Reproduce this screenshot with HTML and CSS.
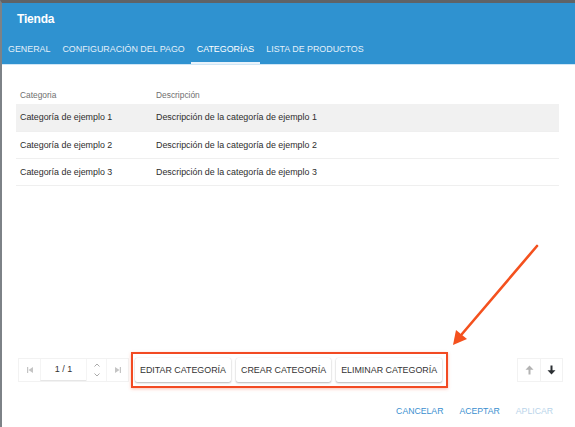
FILE: index.html
```html
<!DOCTYPE html>
<html lang="es">
<head>
<meta charset="utf-8">
<title>Tienda</title>
<link rel="stylesheet" href="styles.css">
</head>
<body>
<div class="dialog">
  <header class="header">
    <h1 class="title">Tienda</h1>
    <nav class="tabs">
      <span class="tab">GENERAL</span>
      <span class="tab">CONFIGURACIÓN DEL PAGO</span>
      <span class="tab active">CATEGORÍAS</span>
      <span class="tab">LISTA DE PRODUCTOS</span>
    </nav>
  </header>
  <main class="content">
    <table class="grid">
      <thead>
        <tr><th class="c1">Categoria</th><th>Descripción</th></tr>
      </thead>
      <tbody>
        <tr class="selected"><td>Categoría de ejemplo 1</td><td>Descripción de la categoría de ejemplo 1</td></tr>
        <tr><td>Categoría de ejemplo 2</td><td>Descripción de la categoría de ejemplo 2</td></tr>
        <tr><td>Categoría de ejemplo 3</td><td>Descripción de la categoría de ejemplo 3</td></tr>
      </tbody>
    </table>
  </main>
  <div class="toolbar">
    <div class="pager">
      <span class="pbtn"><svg width="8" height="8" viewBox="0 0 8 8"><rect x="1" y="1" width="1.2" height="6" fill="#c4c4c4"/><path d="M7 1 L2.5 4 L7 7Z" fill="#c4c4c4"/></svg></span>
      <span class="pinput">1 / 1</span>
      <span class="spin"><svg width="8" height="18" viewBox="0 0 8 18"><path d="M1.5 5.5 L4 3 L6.5 5.5" fill="none" stroke="#aaa" stroke-width="1"/><path d="M1.5 12.5 L4 15 L6.5 12.5" fill="none" stroke="#aaa" stroke-width="1"/></svg></span>
      <span class="pbtn"><svg width="8" height="8" viewBox="0 0 8 8"><path d="M1 1 L5.5 4 L1 7Z" fill="#c4c4c4"/><rect x="5.8" y="1" width="1.2" height="6" fill="#c4c4c4"/></svg></span>
    </div>
    <div class="highlight">
      <button class="btn">EDITAR CATEGORÍA</button>
      <button class="btn">CREAR CATEGORÍA</button>
      <button class="btn">ELIMINAR CATEGORÍA</button>
    </div>
    <div class="order">
      <span class="obtn"><svg width="9" height="10" viewBox="0 0 9 10"><path d="M4.5 0.5 L8.5 4.8 H5.5 V9.5 H3.5 V4.8 H0.5Z" fill="#b3b3b3"/></svg></span>
      <span class="obtn"><svg width="9" height="10" viewBox="0 0 9 10"><path d="M4.5 9.5 L8.5 5.2 H5.5 V0.5 H3.5 V5.2 H0.5Z" fill="#2b2f33"/></svg></span>
    </div>
  </div>
  <footer class="footer">
    <span class="fbtn">CANCELAR</span>
    <span class="fbtn">ACEPTAR</span>
    <span class="fbtn disabled">APLICAR</span>
  </footer>
  <svg class="annot" width="575" height="427" viewBox="0 0 575 427">
    <line x1="537" y1="246" x2="462" y2="334" stroke="#f4511e" stroke-width="2.6" stroke-linecap="round"/>
    <path d="M453 345 L456 330 L467 339Z" fill="#f4511e"/>
  </svg>
</div>
</body>
</html>
```
FILE: styles.css
```css
* { box-sizing: border-box; }
html, body { margin: 0; padding: 0; }
body {
  font-family: "Liberation Sans", Arial, sans-serif;
  background: #fff;
  width: 575px;
  height: 427px;
  overflow: hidden;
}
.dialog {
  position: relative;
  height: 427px;
  display: flex;
  flex-direction: column;
  border-top: 3px solid #5f6367;
  border-left: 2px solid #7d8287;
}
.header {
  background: #2f92d0;
  height: 62px;
  display: flex;
  flex-direction: column;
  border-bottom: 1px solid #cfe6f6;
}
.title {
  margin: 0;
  padding: 9px 0 0 15px;
  height: 35px;
  color: #fff;
  font-size: 12px;
  font-weight: bold;
  letter-spacing: -0.2px;
}
.tabs {
  display: flex;
  padding-left: 0;
  height: 26px;
}
.tab {
  color: #e4f0f9;
  font-size: 8.9px;
  padding: 0 6px 3px;
  display: flex;
  align-items: center;
  border-bottom: 2px solid transparent;
  white-space: nowrap;
}
.tab.active {
  color: #fff;
  border-bottom-color: #e9f3fb;
}
.content {
  flex: 1;
  padding: 21px 16px 0 14px;
}
.grid {
  width: 100%;
  border-collapse: collapse;
}
.grid th {
  text-align: left;
  font-weight: normal;
  font-size: 8.4px;
  color: #6f6f6f;
  height: 18px;
  padding: 0 4px;
}
.grid th.c1 { width: 136px; }
.grid td {
  font-size: 8.9px;
  color: #2d2d2d;
  height: 27px;
  padding: 0 4px;
  border-bottom: 1px solid #efefef;
}
.grid tr.selected td { background: #f1f1f1; }
.toolbar {
  display: flex;
  align-items: center;
  padding: 0 12px 0 16px;
  height: 37px;
  margin-bottom: 7px;
}
.pager {
  display: flex;
  height: 24px;
  border: 1px solid #f2f2f2;
}
.pbtn {
  width: 21px;
  display: flex;
  align-items: center;
  justify-content: center;
}
.pinput {
  width: 46px;
  display: flex;
  align-items: center;
  justify-content: center;
  font-size: 9px;
  color: #333;
  border-bottom: 1px solid #e6e6e6;
  border-left: 1px solid #f4f4f4;
}
.spin {
  width: 21px;
  display: flex;
  align-items: center;
  justify-content: center;
  border-left: 1px solid #f4f4f4;
  border-right: 1px solid #f4f4f4;
}
.highlight {
  display: flex;
  gap: 5px;
  margin-left: 2px;
  padding: 4px 4px 4px 2px;
  border: 2px solid #f24a22;
  box-shadow: 0 1px 3px rgba(240, 80, 40, 0.35);
}
.btn {
  font-family: inherit;
  font-size: 8.9px;
  color: #333;
  background: #fff;
  border: none;
  border-radius: 2px;
  height: 24px;
  padding: 0 5px;
  box-shadow: 0 1px 2px rgba(0, 0, 0, 0.28), 0 0 1px rgba(0, 0, 0, 0.12);
  white-space: nowrap;
}
.order {
  margin-left: auto;
  display: flex;
  height: 24px;
  border: 1px solid #f2f2f2;
}
.obtn {
  width: 22px;
  display: flex;
  align-items: center;
  justify-content: center;
}
.obtn + .obtn { border-left: 1px solid #f2f2f2; }
.footer {
  display: flex;
  justify-content: flex-end;
  gap: 16px;
  padding: 0 22px 0 0;
  height: 32px;
  align-items: center;
}
.fbtn {
  font-size: 8.7px;
  color: #3a8fd0;
}
.fbtn.disabled { color: #b9d4ea; }
.annot {
  position: absolute;
  top: -3px;
  left: -2px;
  pointer-events: none;
}
```
